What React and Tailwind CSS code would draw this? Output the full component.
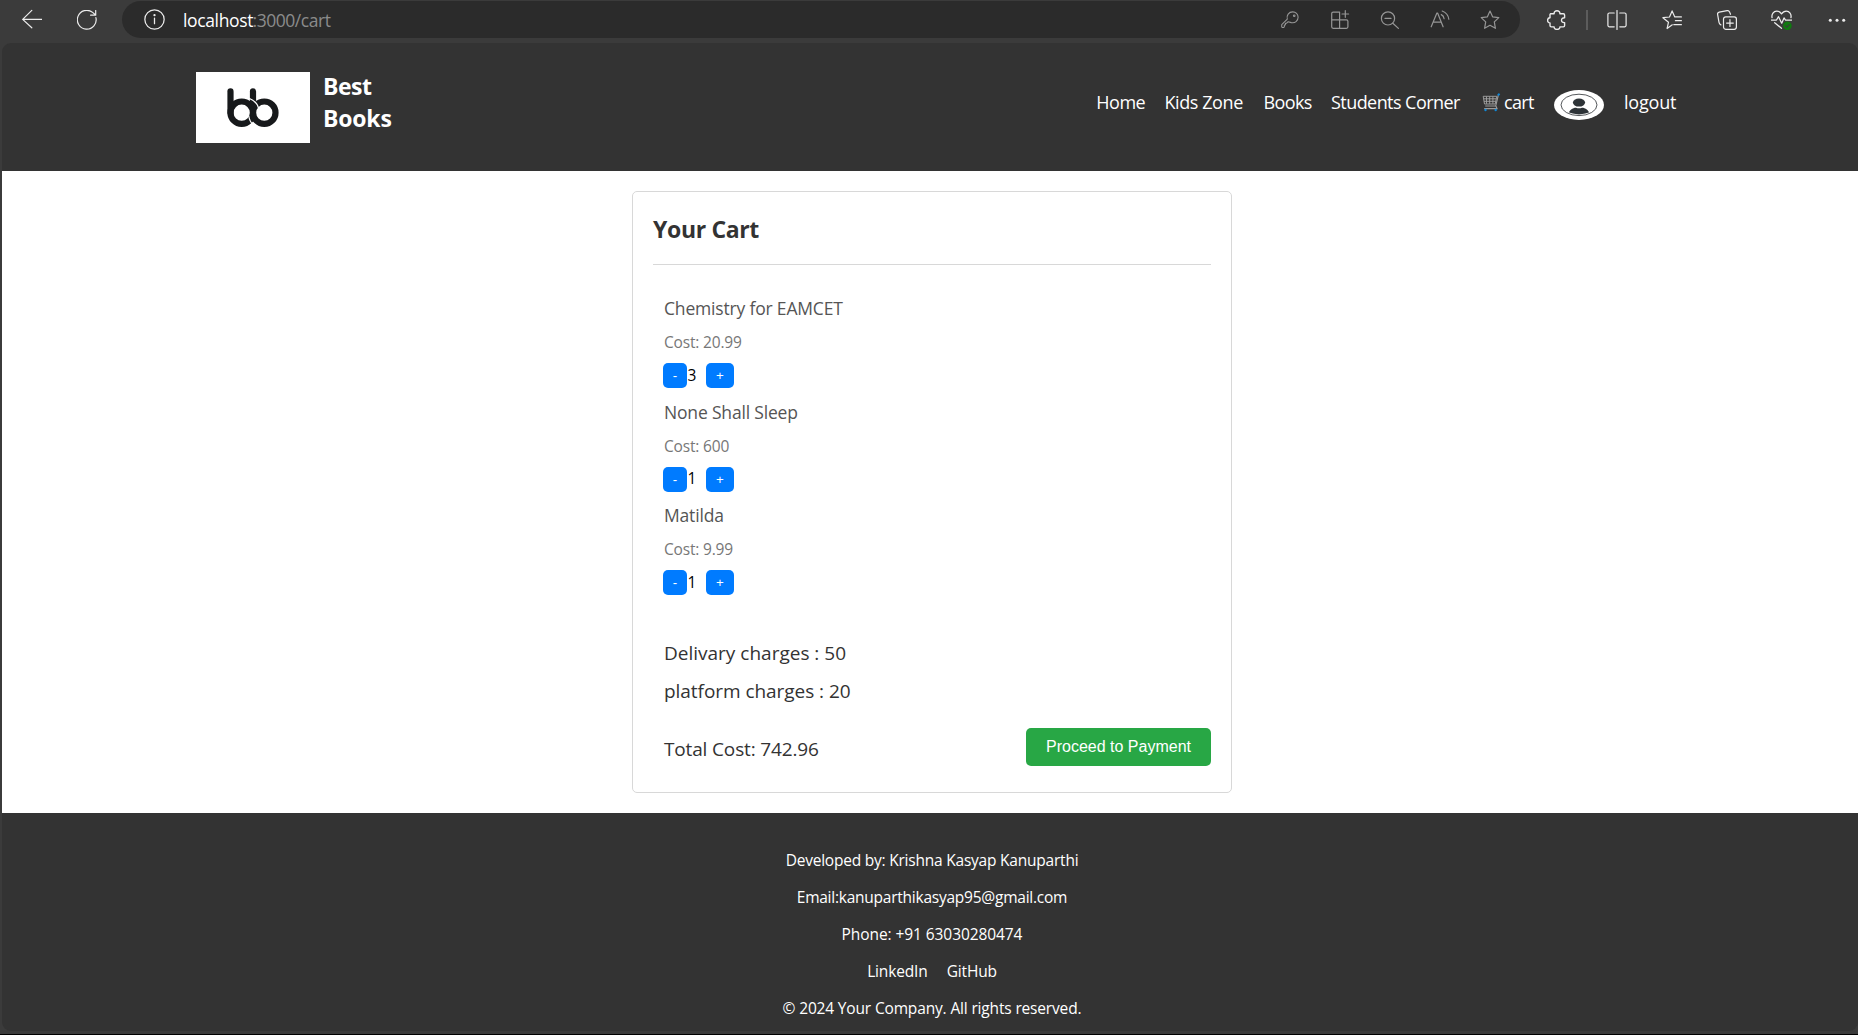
function Icon({ children, size = 20, className = "", box = "0 0 20 20", sw = 1.2 }) {
  return (
    <svg width={size} height={size} viewBox={box} fill="none" stroke="currentColor" strokeWidth={sw} strokeLinecap="round" strokeLinejoin="round" className={"shrink-0 " + className}>
      {children}
    </svg>
  );
}

const STAR = "M10 1.1l2.6 5.7 6.2.8-4.5 4.3 1.1 6.4L10 15.3l-5.4 3 1.1-6.4L1.2 7.6l6.2-.8z";

function Slot({ wide, children }) {
  return <div className={(wide ? "w-[55px]" : "w-[50px]") + " shrink-0 flex items-center justify-center"}>{children}</div>;
}

function Toolbar() {
  return (
    <div className="flex h-[43px] items-start overflow-hidden bg-[#3b3b3b] text-[#ececec]">
      <div className="flex h-[39px] w-[122px] shrink-0 items-center pl-[22px]">
        <Icon className="-mt-px">
          <path d="M20 10.4H.7M9.8 1.4L.7 10.4l9.1 8.4" />
        </Icon>
        <Icon className="ml-[35px]">
          <path d="M18.9 7.6A9.4 9.4 0 1 1 15.6 2.4L18.6 5M18.7.5V5.2H13.6" />
        </Icon>
      </div>
      <div className="mt-px flex h-[37px] w-[1398px] shrink-0 items-center rounded-full bg-[#2b2b2b] pl-[22px] pr-[5px]">
        <Icon size={21} sw={1.2}>
          <circle cx="10" cy="10" r="9.2" />
          <path d="M10 8.6V14" />
          <circle cx="10" cy="5.9" r=".5" fill="currentColor" />
        </Icon>
        <div className="ml-[18px] flex text-[17.5px] leading-6">
          <span className="w-[69.5px] tracking-[-0.36px] text-white">localhost</span>
          <span className="tracking-[-0.45px] text-[#8b8b8b]">:3000/cart</span>
        </div>
        <div className="ml-auto flex text-[#969696]">
          <Slot>
            <Icon size={18}>
              <path d="M8 11.9 6.3 13.6H4.9v1.8l-1.2.2v1.9l-.8.9H1.6L.8 17.6v-2.4L7 9C5.9 4.8 8.6 1 13 1c3.4 0 6 2.6 6 6 0 4.1-3.5 6.9-7.6 5.9z" />
              <circle cx="14.7" cy="5.3" r=".9" />
            </Icon>
          </Slot>
          <Slot>
            <Icon>
              <path d="M9.6 2.1H3.2a1.5 1.5 0 0 0-1.5 1.5v13.2a1.5 1.5 0 0 0 1.5 1.5H16.4a1.5 1.5 0 0 0 1.5-1.5V11.3a1.5 1.5 0 0 0-1.5-1.5H1.7M9.6 2.1V18.3M15.3.7v6.6M12 4h6.6" />
            </Icon>
          </Slot>
          <Slot>
            <Icon>
              <circle cx="8" cy="8.4" r="6.6" />
              <path d="M5 8.4h6M12.8 13.2l5.6 5.2" />
            </Icon>
          </Slot>
          <Slot>
            <Icon>
              <path d="M1.2 16.8 6.9 3h.7l5.5 13.8M3.2 12.1h8M11.3 4.6c1.7.8 2.6 2.2 2.8 4.1M12.2 1c3.8 1.5 6.2 4.3 6.6 8.2" />
            </Icon>
          </Slot>
          <Slot>
            <Icon>
              <path d={STAR} />
            </Icon>
          </Slot>
        </div>
      </div>
      <div className="flex h-[39px] items-center">
        <div className="flex w-[69px] shrink-0 items-center pl-[27px]">
          <Icon>
            <path d="M3.4 3.7H7.1C7 1.7 8.3.7 10 .7s3 1 2.9 3H16.3a1.3 1.3 0 0 1 1.3 1.3V7.8C15.4 7.7 14.5 8.8 14.5 10.2s.9 2.5 3.1 2.4v3a1.3 1.3 0 0 1-1.3 1.3H12.9C13 18.5 11.8 19.4 10 19.4s-3-.9-2.9-2.5H4.3A1.3 1.3 0 0 1 3 15.6V13C1.4 13 .6 11.7.6 10.3S1.4 7.7 3 7.7V4.5z" strokeWidth="1.4" />
          </Icon>
          <div className="ml-[19px] h-5 w-[2px] bg-[#5c5c5c]" />
        </div>
        <Slot wide>
          <Icon>
            <path d="M7.2 3H2.4A1.5 1.5 0 0 0 .9 4.5v10.8a1.5 1.5 0 0 0 1.5 1.5H7.2M12.8 3h4.8a1.5 1.5 0 0 1 1.5 1.5v10.8a1.5 1.5 0 0 1-1.5 1.5H12.8M10 .5v19" />
          </Icon>
        </Slot>
        <Slot wide>
          <Icon>
            <path d="M10.3 14.8 5.1 18.5 6.5 12.2.9 7.7 7.5 7 10.1.9 12.8 6.9H19.4M13.4 10.7h6M11.8 14.7h7.6" />
          </Icon>
        </Slot>
        <Slot wide>
          <Icon>
            <rect x="6.5" y="6.8" width="12.9" height="12.5" rx="2.2" />
            <path d="M12.95 9.7v6.7M9.6 13.05h6.7M3.9 14.9C2.8 14.4 2.2 13.5 2 12.3L.6 4.4C.4 3.2 1 2.4 2.2 2.1L10.1.6C11.4.4 12.3 1.2 12.7 2.3L13.5 4.3" />
          </Icon>
        </Slot>
        <Slot wide>
          <Icon size={21}>
            <path d="M1 8.2C.3 4.8 2.5 2 5.4 2c2 0 3.5 1 4.6 2.7C11.1 3 12.6 2 14.6 2 17.5 2 19.7 4.8 19 8.2M.5 10.5H5.2L7.2 7.3l3 6.2 2.2-5 1.5 2H19.5M3.5 13l6.5 5.4" />
            <circle cx="15.6" cy="16" r="4.1" fill="#0f7b0f" stroke="none" />
            <path d="M13.9 16.1l1.2 1.2 2.3-2.5" stroke="#3b3b3b" strokeWidth="1" />
          </Icon>
        </Slot>
        <Slot wide>
          <Icon>
            <g fill="currentColor" stroke="none">
              <circle cx="3.3" cy="10.2" r="1.5" />
              <circle cx="10" cy="10.2" r="1.5" />
              <circle cx="16.7" cy="10.2" r="1.5" />
            </g>
          </Icon>
        </Slot>
      </div>
    </div>
  );
}

function Logo() {
  return (
    <svg width="114" height="71" viewBox="0 0 114 71" className="mt-[29px] shrink-0 bg-white" fill="none" stroke="#17191b" strokeWidth="6.2" strokeLinecap="round">
      <circle cx="45.7" cy="40.7" r="11.2" />
      <path d="M34.5 19.4V40.7" />
      <path d="M57 19.4V30" />
      <circle cx="68.3" cy="40.7" r="11.2" />
      <path d="M53 26.2C58 28.2 61.8 32 62.8 37" stroke="#fff" strokeWidth="1.2" strokeLinecap="butt" />
      <path d="M52.8 44C53.2 47.5 54.7 50.5 57.2 53" stroke="#fff" strokeWidth="1.2" strokeLinecap="butt" />
    </svg>
  );
}

function CartIcon() {
  return (
    <svg width="19" height="19" viewBox="0 0 19 19" fill="none" className="ml-[2px] mt-[3px] shrink-0">
      <path d="M1.2 3.3H14.8L13.2 11H2.5zM4.5 3.5v7.3M7.7 3.5v7.3M10.9 3.5v7.3M1.6 5.8h12.5M2 8.3h11.7" stroke="#a5a5a5" strokeWidth=".9" />
      <path d="M16.3 2.2 13.7 13H3.2M14 13.2l1 2.4H2.2" stroke="#9b9b9b" strokeWidth="1.2" />
      <path d="M15.8 2.3 17.6.9" stroke="#0f88d8" strokeWidth="2" />
      <circle cx="3.5" cy="17" r="1.2" fill="#0f88d8" />
      <circle cx="13.7" cy="17" r="1.2" fill="#0f88d8" />
    </svg>
  );
}

function Avatar() {
  return (
    <svg width="50" height="30" viewBox="0 0 50 30" className="shrink-0">
      <ellipse cx="25" cy="15" rx="25" ry="15" fill="#fff" />
      <clipPath id="face">
        <ellipse cx="25" cy="14.9" rx="16.3" ry="9.5" />
      </clipPath>
      <ellipse cx="25" cy="14.9" rx="18" ry="10.7" fill="none" stroke="#55585b" strokeWidth="1" />
      <g fill="#2d3337" clipPath="url(#face)">
        <ellipse cx="25" cy="12.6" rx="6.1" ry="4" />
        <path d="M14 27C14 20 18.5 17.8 22 17.7Q25 18.9 28 17.7C31.5 17.8 36 20 36 27z" />
      </g>
    </svg>
  );
}

function Header() {
  return (
    <header className="flex h-[128px] pl-[194px] text-white">
      <Logo />
      <div className="ml-[13px] mt-[27px] w-20 text-[23px] font-bold leading-8 tracking-[-0.2px]">
        <div className="tracking-[-0.5px]">Best</div>
        <div>Books</div>
      </div>
      <nav className="ml-auto mr-[181px] mt-[47px] flex h-[30px] gap-5 whitespace-nowrap text-[18px] leading-6">
        <a className="w-[48.2px] pl-px tracking-[-0.5px]">Home</a>
        <a className="w-[79px] pl-px tracking-[-0.42px]">Kids Zone</a>
        <a className="w-[47.5px] pl-px tracking-[-0.6px]">Books</a>
        <a className="w-[130px] pl-px tracking-[-0.56px]">Students Corner</a>
        <a className="flex w-[54px] gap-[3px] tracking-[-0.7px]">
          <CartIcon />
          cart
        </a>
        <Avatar />
        <a className="w-[53px] tracking-[-0.2px]">logout</a>
      </nav>
    </header>
  );
}

const ITEMS = [
  { name: "Chemistry for EAMCET", cost: "20.99", qty: 3 },
  { name: "None Shall Sleep", cost: "600", qty: 1 },
  { name: "Matilda", cost: "9.99", qty: 1 },
];

function CartItem({ item }) {
  return (
    <li className="h-[103.6px] pl-[10px]">
      <div className="pl-px text-[17.5px] leading-6 tracking-[-0.18px] text-[#555]">{item.name}</div>
      <div className="mt-3 pl-px text-[15.5px] leading-5 tracking-[-0.18px] text-[#777]">Cost: {item.cost}</div>
      <div className="mt-[11px] flex h-[25px] items-center font-['Liberation_Sans'] text-[13.3px] text-white">
        <button className="h-[25px] w-6 rounded-[5px] bg-[#007bff] leading-[25px]">-</button>
        <span className="w-[19px] -translate-y-px pl-[0.5px] font-['Open_Sans'] text-[15.5px] leading-5 text-black">{item.qty}</span>
        <button className="h-[25px] w-7 rounded-[5px] bg-[#007bff] leading-[25px]">+</button>
      </div>
    </li>
  );
}

function Cart() {
  return (
    <main className="h-[642px] bg-white pl-[630px] pt-5">
      <section className="h-[602px] w-[600px] rounded-[5px] border border-[#d8d8d8] px-5 pt-[21px]">
        <h2 className="h-[52px] border-b border-[#d8d8d8] text-[23px] font-bold leading-8 tracking-[-0.35px] text-[#333]">Your Cart</h2>
        <ul className="mt-[31px]">
          {ITEMS.map((item) => (
            <CartItem key={item.name} item={item} />
          ))}
        </ul>
        <div className="mt-[32px] pl-[11px] text-[19px] leading-7 text-[#333]">
          <p>Delivary charges : 50</p>
          <p className="mt-[10px] tracking-[-0.05px]">platform charges : 20</p>
        </div>
        <div className="mt-[23px] flex justify-between pl-[11px]">
          <p className="mt-[7px] text-[19px] leading-7 tracking-[-0.15px] text-[#333]">Total Cost: 742.96</p>
          <button className="h-[38px] w-[185px] rounded-[5px] bg-[#28a745] font-['Liberation_Sans'] text-[16px] leading-[37px] text-white">Proceed to Payment</button>
        </div>
      </section>
    </main>
  );
}

function Footer() {
  return (
    <footer className="h-[218px] w-[1860px] pt-[29px] text-center text-[15.5px] leading-[37px] text-white">
      <p className="tracking-[-0.22px]">Developed by: Krishna Kasyap Kanuparthi</p>
      <p className="tracking-[-0.24px]">Email:kanuparthikasyap95@gmail.com</p>
      <p className="tracking-[-0.08px]">Phone: +91 63030280474</p>
      <p className="flex justify-center gap-[19px] tracking-[-0.15px]">
        <a>LinkedIn</a>
        <a>GitHub</a>
      </p>
      <p className="tracking-[-0.16px]">© 2024 Your Company. All rights reserved.</p>
    </footer>
  );
}

export default function App() {
  return (
    <div className="h-[1035px] w-[1858px] overflow-hidden border-b border-black bg-[#3b3b3b] font-['Open_Sans',sans-serif]">
      <Toolbar />
      <div className="ml-[2px] h-[988px] w-[1856px] overflow-hidden rounded-[9px] bg-[#333]">
        <Header />
        <Cart />
        <Footer />
      </div>
    </div>
  );
}
